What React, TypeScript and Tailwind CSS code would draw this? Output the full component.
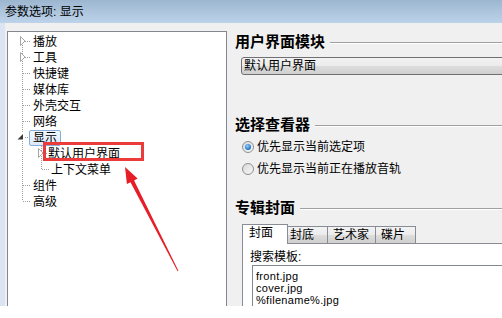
import React from "react";

const font = "font-['Liberation_Sans','Noto_Sans_CJK_SC',sans-serif]";

const topItems = ["播放", "工具", "快捷键", "媒体库", "外壳交互", "网络"];

function TreeLines() {
  // connector lines + expanders, inner coords of the tree box
  const rows = [0, 1, 2, 3, 4, 5, 6, 9, 10];
  return (
    <svg className="absolute left-0 top-0" width="218" height="200" shapeRendering="crispEdges">
      <line x1="14.5" y1="9" x2="14.5" y2="169" stroke="#a0a0a0" strokeDasharray="1 1" />
      {rows.map((r) => (
        <line key={r} x1="15" y1={9.5 + r * 16} x2="23" y2={9.5 + r * 16} stroke="#a0a0a0" strokeDasharray="1 1" />
      ))}
      <line x1="33.5" y1="114" x2="33.5" y2="137" stroke="#a0a0a0" strokeDasharray="1 1" />
      <line x1="34" y1="121.5" x2="40" y2="121.5" stroke="#a0a0a0" strokeDasharray="1 1" />
      <line x1="34" y1="137.5" x2="42" y2="137.5" stroke="#a0a0a0" strokeDasharray="1 1" />
      <g shapeRendering="auto">
        <polygon points="12.5,4.5 17,9 12.5,13.5" fill="white" stroke="#a6a6a6" />
        <polygon points="12.5,20.5 17,25 12.5,29.5" fill="white" stroke="#a6a6a6" />
        <rect x="9" y="100" width="7" height="9" fill="white" />
        <polygon points="15,102 15,107.5 9.5,107.5" fill="#3a3a3a" />
        <polygon points="30.5,116.5 35,121 30.5,125.5" fill="white" stroke="#a6a6a6" />
      </g>
    </svg>
  );
}

function Heading({ text }: { text: string }) {
  return (
    <div className="flex h-[18px] items-start">
      <span className="text-[15px] leading-[18px] font-bold text-black whitespace-nowrap">{text}</span>
      <div className="ml-[5px] mt-[9px] flex-1 h-[2px] border-t border-[#a0a0a0] border-b border-b-white" />
    </div>
  );
}

function Radio({ checked, label }: { checked?: boolean; label: string }) {
  return (
    <div className="flex h-[16px] items-center">
      <div className="ml-[7px] flex h-[12px] w-[12px] items-center justify-center rounded-full border border-[#8e8f8f] bg-[linear-gradient(135deg,#d9d9d9,#f7f7f7)]">
        {checked && (
          <div className="h-[6px] w-[6px] rounded-full bg-[radial-gradient(circle_at_40%_35%,#8fd0ff,#1d6fc4_70%,#0f4c8f)]" />
        )}
      </div>
      <span className="ml-[3px] text-[12px] leading-[16px] text-black whitespace-nowrap">{label}</span>
    </div>
  );
}

const tabBg =
  "bg-[linear-gradient(to_bottom,#f3f3f3_0%,#ebebeb_50%,#dddddd_51%,#cfcfcf_100%)]";

export default function App() {
  return (
    <div className={`relative w-[502px] h-[318px] bg-white overflow-hidden ${font}`}>
      {/* title bar */}
      <div className="h-[23px] flex items-center px-[5px] bg-[linear-gradient(to_bottom,#9db6d0,#bcd3ea)]">
        <span className="text-[12px] leading-[16px] text-black">参数选项: 显示</span>
      </div>

      <div className="flex h-[283px] overflow-hidden">
        <div className="w-[5px] shrink-0 bg-[#dbe5f1]" />
        <div className="flex flex-1 bg-[#f0f0f0] pl-[2px] pt-[8px] overflow-hidden">
          {/* tree */}
          <div className="relative h-[300px] w-[220px] shrink-0 border border-[#828790] bg-white">
            <TreeLines />
            <div className="relative pt-[2px] text-[12px] leading-[16px] text-black">
              {topItems.map((t) => (
                <div key={t} className="h-[16px] pl-[25px] whitespace-nowrap">{t}</div>
              ))}
              <div className="h-[16px] pl-[21px]">
                <span className="inline-block h-[16px] rounded-[2px] border border-[#84acdd] bg-[linear-gradient(to_bottom,#f2f8fe,#dae9fb)] px-[3px] leading-[14px]">
                  显示
                </span>
              </div>
              <div className="h-[16px] pl-[40px] whitespace-nowrap">默认用户界面</div>
              <div className="h-[16px] pl-[43px] whitespace-nowrap">上下文菜单</div>
              <div className="h-[16px] pl-[25px]">组件</div>
              <div className="h-[16px] pl-[25px]">高级</div>
            </div>
          </div>

          {/* right side */}
          <div className="flex flex-1 flex-col pl-[8px] pt-[2px] overflow-hidden">
            <Heading text="用户界面模块" />
            <div className="ml-[6px] -mr-[20px] mt-[6px] flex h-[21px] items-center rounded-[3px] border border-[#707070] bg-[linear-gradient(to_bottom,#f2f2f2_0%,#ebebeb_50%,#dddddd_51%,#cfcfcf_100%)] pl-[2px]">
              <span className="text-[12px] leading-[16px] text-black">默认用户界面</span>
            </div>

            <div className="mt-[41px]">
              <Heading text="选择查看器" />
            </div>
            <div className="mt-[5px] flex flex-col gap-[6px]">
              <Radio checked label="优先显示当前选定项" />
              <Radio label="优先显示当前正在播放音轨" />
            </div>

            <div className="mt-[22px]">
              <Heading text="专辑封面" />
            </div>

            <div className="ml-[7px] -mr-[20px] mt-[7px] flex flex-col">
              <div className="flex h-[19px] items-end">
                <div className="relative z-10 -mb-[1px] h-[20px] w-[46px] border border-b-0 border-[#898c95] bg-white pl-[6px] text-[12px] leading-[16px] text-black">
                  封面
                </div>
                <div className={`-ml-[1px] h-[17px] w-[41px] border border-b-0 border-[#898c95] ${tabBg} pl-[2px] pt-[1px] text-[12px] leading-[15px] text-black`}>
                  封底
                </div>
                <div className={`-ml-[1px] h-[17px] w-[49px] border border-b-0 border-[#898c95] ${tabBg} pl-[5px] pt-[1px] text-[12px] leading-[15px] text-black`}>
                  艺术家
                </div>
                <div className={`-ml-[1px] h-[17px] w-[41px] border border-b-0 border-[#898c95] ${tabBg} pl-[5px] pt-[1px] text-[12px] leading-[15px] text-black`}>
                  碟片
                </div>
              </div>
              <div className="h-[80px] border-l border-t border-[#898c95] bg-white">
                <div className="mt-[5px] h-[16px] pl-[7px] text-[12px] leading-[16px] text-black">搜索模板:</div>
                <div className="ml-[9px] h-[60px] border border-[#828790] bg-white pl-[3px] pt-[4px] text-[11px] leading-[12px] tracking-[0.3px] text-black">
                  <div className="h-[12px]">front.jpg</div>
                  <div className="h-[12px]">cover.jpg</div>
                  <div className="h-[12px]">%filename%.jpg</div>
                </div>
              </div>
            </div>
          </div>
        </div>
      </div>

      {/* annotation */}
      <div className="absolute left-[43px] top-[142px] h-[19px] w-[101px] border-[3px] border-[#ec3b3b]" />
      <svg className="absolute left-0 top-0" width="502" height="318">
        <polygon
          points="125,167 137.6,178.6 134.1,180.4 178.4,270.8 177.6,271.2 130.5,182.2 126.9,184"
          fill="#e61e28"
        />
      </svg>
    </div>
  );
}
